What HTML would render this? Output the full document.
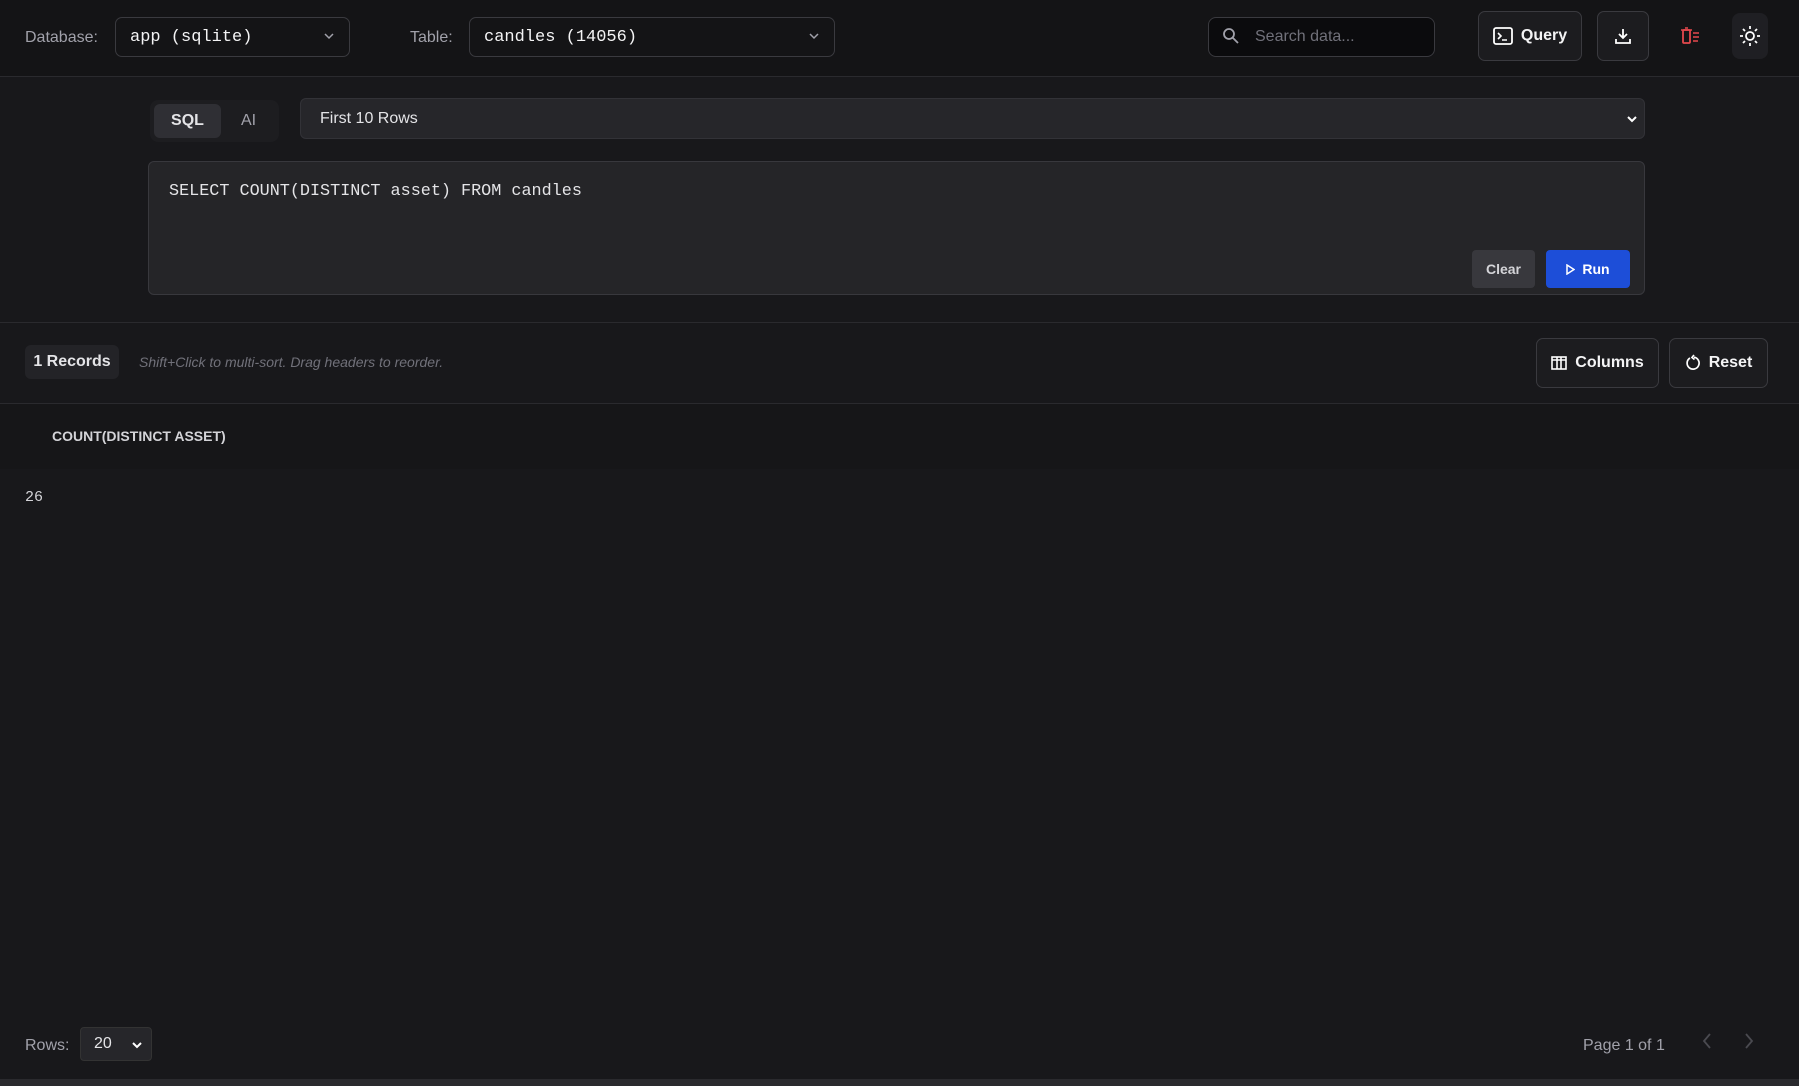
<!DOCTYPE html>
<html><head><meta charset="utf-8"><style>
*{box-sizing:border-box;margin:0;padding:0}
body{width:1799px;height:1086px;background:#18181b;font-family:"Liberation Sans",sans-serif;color:#e4e4e7;position:relative;overflow:hidden}
.a{position:absolute}
.top{left:0;top:0;width:1799px;height:77px;background:#141416;border-bottom:1px solid #2a2a2e}
.lbl{font-size:16px;color:#a1a1aa}
.sel{border:1px solid #3a3a3f;border-radius:7px;background:#141416;font-family:"Liberation Mono",monospace;font-size:17px;color:#f4f4f5;padding-left:14px;display:flex;align-items:center}
.btn{border:1px solid #3a3a3f;border-radius:7px;background:#1c1c1f;display:flex;align-items:center;justify-content:center;color:#f4f4f5;font-weight:bold;font-size:16px;gap:8px}
.chev{position:absolute;right:14px;top:50%;margin-top:-5px}
</style></head><body>
<div class="a top"></div>
<div class="a lbl" style="left:25px;top:29px">Database:</div>
<div class="a sel" style="left:115px;top:17px;width:235px;height:40px">app (sqlite)<svg class="chev" width="12" height="8" viewBox="0 0 12 8"><path d="M2 2l4 4 4-4" stroke="#a1a1aa" stroke-width="1.5" fill="none"/></svg></div>
<div class="a lbl" style="left:410px;top:29px">Table:</div>
<div class="a sel" style="left:469px;top:17px;width:366px;height:40px">candles (14056)<svg class="chev" width="12" height="8" viewBox="0 0 12 8"><path d="M2 2l4 4 4-4" stroke="#a1a1aa" stroke-width="1.5" fill="none"/></svg></div>
<div class="a" style="left:1208px;top:17px;width:227px;height:40px;border:1px solid #3a3a3f;border-radius:8px;background:#0b0b0d"></div>
<svg class="a" style="left:1222px;top:27px" width="18" height="18" viewBox="0 0 18 18"><circle cx="7" cy="7" r="5" stroke="#a1a1aa" stroke-width="1.8" fill="none"/><path d="M11 11l5 5" stroke="#a1a1aa" stroke-width="1.8"/></svg>
<div class="a" style="left:1255px;top:28px;font-size:16px;color:#71717a">Search data...</div>
<div class="a btn" style="left:1478px;top:11px;width:104px;height:50px"><svg width="20" height="18" viewBox="0 0 20 18"><rect x="1" y="1" width="18" height="16" rx="2" stroke="#fff" stroke-width="1.8" fill="none"/><path d="M5 6l3 3-3 3M9 13h5" stroke="#fff" stroke-width="1.6" fill="none"/></svg>Query</div>
<div class="a btn" style="left:1597px;top:11px;width:52px;height:50px"><svg width="18" height="18" viewBox="0 0 18 18"><path d="M9 2v9M5 7l4 4 4-4M2 12v4h14v-4" stroke="#fff" stroke-width="1.8" fill="none"/></svg></div>
<svg class="a" style="left:1680px;top:27px" width="22" height="18" viewBox="0 0 22 18"><rect x="3" y="3" width="7" height="13" rx="1" stroke="#e5484d" stroke-width="1.8" fill="none"/><path d="M1 3h11M5 1h3M13 6h6M13 10h6M13 14h5" stroke="#e5484d" stroke-width="1.6"/></svg>
<div class="a" style="left:1732px;top:13px;width:36px;height:46px;background:#1f1f23;border-radius:8px"></div>
<svg class="a" style="left:1738px;top:24px" width="24" height="24" viewBox="0 0 24 24"><circle cx="12" cy="12" r="4" stroke="#fff" stroke-width="1.8" fill="none"/><path d="M12 2v3M12 19v3M2 12h3M19 12h3M5 5l2 2M17 17l2 2M5 19l2-2M17 7l2-2" stroke="#fff" stroke-width="1.8"/></svg>

<div class="a" style="left:150px;top:100px;width:129px;height:42px;background:#1d1d20;border-radius:8px"></div>
<div class="a" style="left:154px;top:104px;width:67px;height:34px;background:#2f2f34;border-radius:6px;font-weight:bold;font-size:16px;display:flex;align-items:center;justify-content:center">SQL</div>
<div class="a" style="left:241px;top:112px;font-size:16px;color:#a1a1aa">AI</div>
<div class="a" style="left:300px;top:98px;width:1345px;height:41px;background:#26262a;border:1px solid #323237;border-radius:6px;font-size:16px;padding-left:19px;display:flex;align-items:center">First 10 Rows<svg style="position:absolute;right:6px;top:16px" width="12" height="8" viewBox="0 0 12 8"><path d="M2 2l4 4 4-4" stroke="#fff" stroke-width="2" fill="none"/></svg></div>
<div class="a" style="left:148px;top:161px;width:1497px;height:134px;background:#252528;border:1px solid #38383d;border-radius:6px"></div>
<div class="a" style="left:169px;top:182px;font-family:'Liberation Mono',monospace;font-size:16.8px;color:#e4e4e7">SELECT COUNT(DISTINCT asset) FROM candles</div>
<div class="a" style="left:1472px;top:250px;width:63px;height:38px;background:#38383d;border-radius:4px;font-size:14px;font-weight:bold;color:#d4d4d8;display:flex;align-items:center;justify-content:center">Clear</div>
<div class="a" style="left:1546px;top:250px;width:84px;height:38px;background:#1d4ed8;border-radius:4px;font-size:14px;font-weight:bold;color:#fff;display:flex;align-items:center;justify-content:center;gap:7px"><svg width="9" height="11" viewBox="0 0 9 11"><path d="M1 1l7 4.5-7 4.5z" stroke="#fff" stroke-width="1.5" fill="none"/></svg>Run</div>
<div class="a" style="left:0;top:322px;width:1799px;height:1px;background:#2a2a2e"></div>
<div class="a" style="left:25px;top:345px;width:94px;height:34px;background:#232327;border-radius:6px;font-size:16px;font-weight:bold;display:flex;align-items:center;justify-content:center">1 Records</div>
<div class="a" style="left:139px;top:354px;font-size:14px;font-style:italic;color:#71717a">Shift+Click to multi-sort. Drag headers to reorder.</div>
<div class="a btn" style="left:1536px;top:338px;width:123px;height:50px"><svg width="16" height="14" viewBox="0 0 16 14"><rect x="1" y="1" width="14" height="12" stroke="#fff" stroke-width="1.6" fill="none"/><path d="M6 1v12M10 1v12M1 4h14" stroke="#fff" stroke-width="1.6"/></svg>Columns</div>
<div class="a btn" style="left:1669px;top:338px;width:99px;height:50px"><svg width="16" height="18" viewBox="0 0 16 18"><path d="M5 4A6 6 0 1 0 9 3.2M9 1l-2 2.5 2.5 2" stroke="#fff" stroke-width="1.7" fill="none"/></svg>Reset</div>
<div class="a" style="left:0;top:403px;width:1799px;height:66px;background:#161618;border-top:1px solid #2a2a2e"></div>
<div class="a" style="left:52px;top:428px;font-size:14px;font-weight:bold;color:#d4d4d8">COUNT(DISTINCT ASSET)</div>
<div class="a" style="left:25px;top:489px;font-family:'Liberation Mono',monospace;font-size:15px;color:#d4d4d8">26</div>
<div class="a lbl" style="left:25px;top:1037px">Rows:</div>
<div class="a" style="left:80px;top:1027px;width:72px;height:34px;background:#26262a;border:1px solid #333;border-radius:4px;font-size:16px;padding-left:13px;display:flex;align-items:center">20<svg style="position:absolute;right:8px;top:13px" width="12" height="8" viewBox="0 0 12 8"><path d="M2 2l4 4 4-4" stroke="#fff" stroke-width="2" fill="none"/></svg></div>
<div class="a" style="left:1583px;top:1037px;font-size:16px;color:#a1a1aa">Page 1 of 1</div>
<svg class="a" style="left:1701px;top:1032px" width="12" height="18" viewBox="0 0 12 18"><path d="M9 2L3 9l6 7" stroke="#4a4a50" stroke-width="1.8" fill="none"/></svg>
<svg class="a" style="left:1743px;top:1032px" width="12" height="18" viewBox="0 0 12 18"><path d="M3 2l6 7-6 7" stroke="#4a4a50" stroke-width="1.8" fill="none"/></svg>
<div class="a" style="left:0;top:1079px;width:1799px;height:7px;background:#2a2a2e"></div>
</body></html>
